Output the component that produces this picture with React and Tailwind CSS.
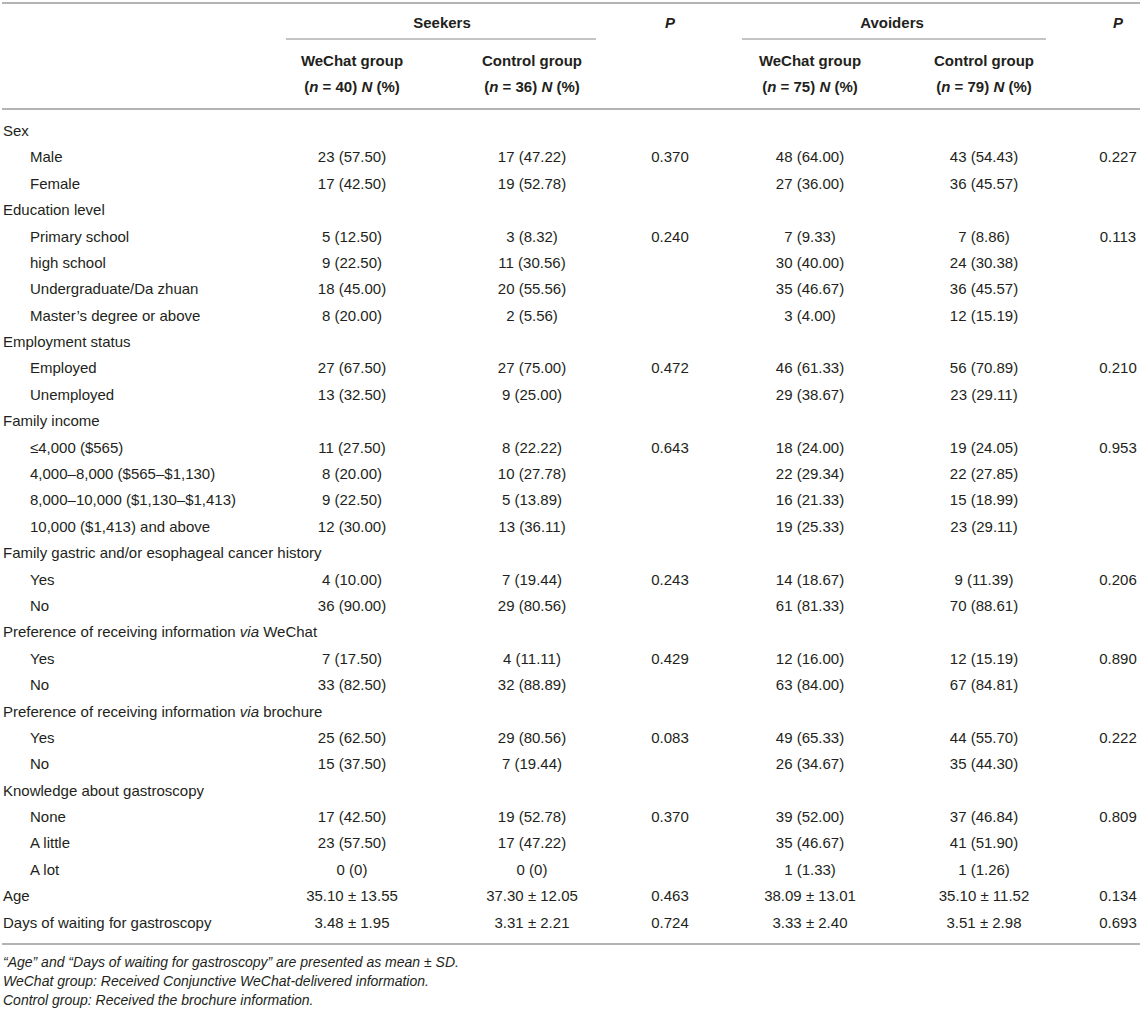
import React from 'react';

const rows = [
  { label: 'Sex', group: true },
  { label: 'Male', v: ['23 (57.50)', '17 (47.22)', '0.370', '48 (64.00)', '43 (54.43)', '0.227'] },
  { label: 'Female', v: ['17 (42.50)', '19 (52.78)', '', '27 (36.00)', '36 (45.57)', ''] },
  { label: 'Education level', group: true },
  { label: 'Primary school', v: ['5 (12.50)', '3 (8.32)', '0.240', '7 (9.33)', '7 (8.86)', '0.113'] },
  { label: 'high school', v: ['9 (22.50)', '11 (30.56)', '', '30 (40.00)', '24 (30.38)', ''] },
  { label: 'Undergraduate/Da zhuan', v: ['18 (45.00)', '20 (55.56)', '', '35 (46.67)', '36 (45.57)', ''] },
  { label: 'Master\u2019s degree or above', v: ['8 (20.00)', '2 (5.56)', '', '3 (4.00)', '12 (15.19)', ''] },
  { label: 'Employment status', group: true },
  { label: 'Employed', v: ['27 (67.50)', '27 (75.00)', '0.472', '46 (61.33)', '56 (70.89)', '0.210'] },
  { label: 'Unemployed', v: ['13 (32.50)', '9 (25.00)', '', '29 (38.67)', '23 (29.11)', ''] },
  { label: 'Family income', group: true },
  { label: '\u22644,000 ($565)', v: ['11 (27.50)', '8 (22.22)', '0.643', '18 (24.00)', '19 (24.05)', '0.953'] },
  { label: '4,000\u20138,000 ($565\u2013$1,130)', v: ['8 (20.00)', '10 (27.78)', '', '22 (29.34)', '22 (27.85)', ''] },
  { label: '8,000\u201310,000 ($1,130\u2013$1,413)', v: ['9 (22.50)', '5 (13.89)', '', '16 (21.33)', '15 (18.99)', ''] },
  { label: '10,000 ($1,413) and above', v: ['12 (30.00)', '13 (36.11)', '', '19 (25.33)', '23 (29.11)', ''] },
  { label: 'Family gastric and/or esophageal cancer history', group: true },
  { label: 'Yes', v: ['4 (10.00)', '7 (19.44)', '0.243', '14 (18.67)', '9 (11.39)', '0.206'] },
  { label: 'No', v: ['36 (90.00)', '29 (80.56)', '', '61 (81.33)', '70 (88.61)', ''] },
  { label: <>Preference of receiving information <i>via</i> WeChat</>, group: true },
  { label: 'Yes', v: ['7 (17.50)', '4 (11.11)', '0.429', '12 (16.00)', '12 (15.19)', '0.890'] },
  { label: 'No', v: ['33 (82.50)', '32 (88.89)', '', '63 (84.00)', '67 (84.81)', ''] },
  { label: <>Preference of receiving information <i>via</i> brochure</>, group: true },
  { label: 'Yes', v: ['25 (62.50)', '29 (80.56)', '0.083', '49 (65.33)', '44 (55.70)', '0.222'] },
  { label: 'No', v: ['15 (37.50)', '7 (19.44)', '', '26 (34.67)', '35 (44.30)', ''] },
  { label: 'Knowledge about gastroscopy', group: true },
  { label: 'None', v: ['17 (42.50)', '19 (52.78)', '0.370', '39 (52.00)', '37 (46.84)', '0.809'] },
  { label: 'A little', v: ['23 (57.50)', '17 (47.22)', '', '35 (46.67)', '41 (51.90)', ''] },
  { label: 'A lot', v: ['0 (0)', '0 (0)', '', '1 (1.33)', '1 (1.26)', ''] },
  { label: 'Age', top: true, v: ['35.10 \u00b1 13.55', '37.30 \u00b1 12.05', '0.463', '38.09 \u00b1 13.01', '35.10 \u00b1 11.52', '0.134'] },
  { label: 'Days of waiting for gastroscopy', top: true, v: ['3.48 \u00b1 1.95', '3.31 \u00b1 2.21', '0.724', '3.33 \u00b1 2.40', '3.51 \u00b1 2.98', '0.693'] },
];

const groups = [['WeChat group', '40'], ['Control group', '36'], null, ['WeChat group', '75'], ['Control group', '79'], null];

const cols = 'grid grid-cols-[262px_180px_180px_96px_184px_164px_76px]';

export default function App() {
  return (
    <div className="w-[1142px] h-[1010px] bg-white text-[#231f20] text-[15px] font-['Liberation_Sans',Arial,sans-serif]">
      <div className="pt-[2px]">
        <div className="h-[2px] bg-[#b4b4b4] mx-[2px]" />

        {/* header */}
        <div className={cols}>
          <div />
          <div className="col-span-2 flex flex-col">
            <div className="h-[34px] pt-[10px] text-center font-bold leading-[18px]">Seekers</div>
            <div className="border-t-[2px] border-[#c4c4c4] ml-[24px] mr-[26px]" />
          </div>
          <div className="pt-[10px] text-center font-bold italic leading-[18px]">P</div>
          <div className="col-span-2 flex flex-col">
            <div className="h-[34px] pt-[10px] text-center font-bold leading-[18px]">Avoiders</div>
            <div className="border-t-[2px] border-[#c4c4c4] ml-[24px] mr-[20px]" />
          </div>
          <div className="pt-[10px] pl-[28px] text-center font-bold italic leading-[18px]">P</div>
        </div>
        <div className={`${cols} pt-[8px] pb-[8px] font-bold`}>
          <div />
          {groups.map((h, i) =>
            h ? (
              <div key={i} className="flex flex-col items-center">
                <div className="h-[26px] leading-[26px]">{h[0]}</div>
                <div className="h-[26px] leading-[26px]">
                  (<i>n</i> = {h[1]}) <i>N</i> (%)
                </div>
              </div>
            ) : (
              <div key={i} />
            )
          )}
        </div>
        <div className="h-[2px] bg-[#b4b4b4] mx-[2px]" />

        {/* body */}
        <div className="pt-[8px] pb-[7px]">
          {rows.map((r, i) => (
            <div key={i} className={`${cols} h-[26.4px] items-center`}>
              <div className={`whitespace-nowrap ${r.group || r.top ? 'pl-[3px]' : 'pl-[30px]'} ${r.group ? 'col-span-7' : ''}`}>
                {r.label}
              </div>
              {!r.group &&
                r.v.map((c, j) => (
                  <div key={j} className={`text-center whitespace-nowrap ${j === 5 ? 'pl-[28px]' : ''}`}>
                    {c}
                  </div>
                ))}
            </div>
          ))}
        </div>
        <div className="h-[2px] bg-[#b4b4b4] mx-[2px]" />

        {/* notes */}
        <div className="pt-[8px] pl-[3px] text-[14px] italic leading-[19px]">
          <p>{'\u201cAge\u201d and \u201cDays of waiting for gastroscopy\u201d are presented as mean \u00b1 SD.'}</p>
          <p>WeChat group: Received Conjunctive WeChat-delivered information.</p>
          <p>Control group: Received the brochure information.</p>
        </div>
      </div>
    </div>
  );
}
